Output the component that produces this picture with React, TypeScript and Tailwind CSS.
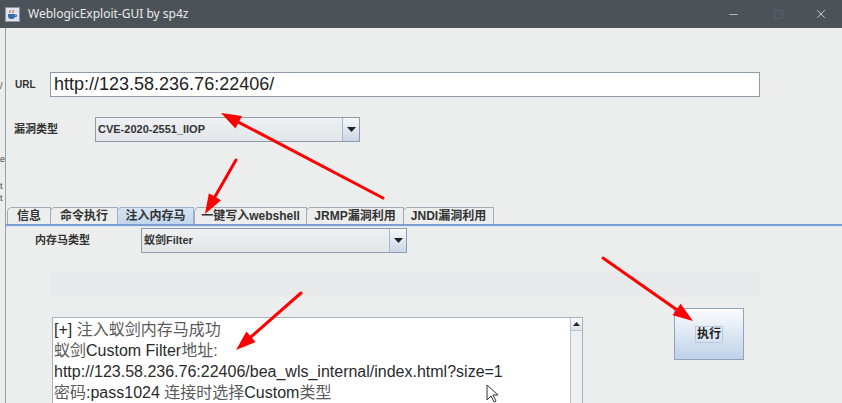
import React from 'react';
import { Minus, Square, X } from 'lucide-react';

const TABS = [
  { label: '信息', w: 'w-[44px]' },
  { label: '命令执行', w: 'w-[68px]' },
  { label: '注入内存马', w: 'w-[77px]' },
  { label: '一键写入webshell', w: 'w-[113px]' },
  { label: 'JRMP漏洞利用', w: 'w-[98px]' },
  { label: 'JNDI漏洞利用', w: 'w-[91px]' },
];
const ACTIVE_TAB = 2;

// red annotation arrows: [tailX, tailY, tipX, tipY]
const ARROWS: [number, number, number, number][] = [
  [383, 198, 221, 113],
  [236, 160, 205, 214],
  [301, 293, 236, 350],
  [603, 258, 693, 321],
];

function Arrow({ a }: { a: [number, number, number, number] }) {
  const [x1, y1, x2, y2] = a;
  const dx = x2 - x1;
  const dy = y2 - y1;
  const len = Math.hypot(dx, dy);
  const ux = dx / len;
  const uy = dy / len;
  const head = 20;
  const half = 7;
  const bx = x2 - ux * head;
  const by = y2 - uy * head;
  const pts = `${x2},${y2} ${bx - uy * half},${by + ux * half} ${bx + uy * half},${by - ux * half}`;
  return (
    <g>
      <line x1={x1} y1={y1} x2={bx + ux * 2} y2={by + uy * 2} stroke="#f00" strokeWidth={3} strokeLinecap="round" />
      <polygon points={pts} fill="#f00" />
    </g>
  );
}

function Combo({ value, width }: { value: string; width: string }) {
  return (
    <div className={`${width} h-[25px] flex border border-[#8d9cad] bg-gradient-to-b from-[#eef0f2] to-[#e3e6e9]`}>
      <div className="flex-1 flex items-center pl-[2px] text-[11px] font-bold text-[#333] truncate">{value}</div>
      <div className="w-[17px] h-full border-l border-[#a8b6c6] bg-gradient-to-b from-[#f6f8fa] to-[#c9d7e7] flex items-center justify-center">
        <svg width="9" height="5" viewBox="0 0 9 5"><polygon points="0,0 9,0 4.5,5" fill="#222" /></svg>
      </div>
    </div>
  );
}

export default function App() {
  return (
    <div className="relative w-[842px] h-[403px] overflow-hidden bg-[#eceeed] font-['Liberation_Sans','Noto_Sans_CJK_SC',sans-serif] text-[#333]">
      {/* title bar */}
      <div className="h-[28px] bg-[#4b5258] flex items-center">
        <div className="ml-[5px] w-[15px] h-[15px] bg-[#dfe4ea] border border-[#8a96a3] flex items-end justify-center pb-[1px]">
          <svg width="11" height="11" viewBox="0 0 11 11">
            <path d="M3 1c1 1-1 2 0 3M6 1c1 1-1 2 0 3" stroke="#d03a2a" strokeWidth="1" fill="none" />
            <path d="M1 5h7v2a3 3 0 0 1-3 3H4a3 3 0 0 1-3-3z" fill="#3a6ab0" />
            <path d="M8 6h1.5v1.5H8" stroke="#3a6ab0" fill="none" />
          </svg>
        </div>
        <span className="ml-[8px] text-[12px] text-[#e9eaea] font-['Noto_Sans',sans-serif]">WeblogicExploit-GUI by sp4z</span>
        <div className="ml-auto flex items-center">
          <Minus size={13} strokeWidth={1.2} className="text-[#f0f0f0] mr-[33px]" />
          <Square size={11} strokeWidth={1.2} className="text-[#6a7177] mr-[30px]" />
          <X size={14} strokeWidth={1.3} className="text-[#eeeeee] mr-[14px]" />
        </div>
      </div>

      <div className="flex h-[375px]">
        {/* glyphs of the window behind, peeking out at the edge */}
        <div className="w-[5px] shrink-0 text-[9px] leading-none text-[#444]">
          <div className="mt-[54px]">/</div>
          <div className="mt-[64px]">e</div>
          <div className="mt-[18px]">t</div>
          <div className="mt-[3px]">t</div>
        </div>

        <div className="flex-1 border-l border-[#9aa1a8] flex flex-col [&>*]:shrink-0">
          {/* URL */}
          <div className="mt-[44px] flex items-center pl-[9px]">
            <span className="w-[35px] text-[10px] font-bold text-[#333]">URL</span>
            <div className="w-[710px] h-[25px] bg-white border border-[#8e9aa7] flex items-center pl-[3px] text-[18px] text-[#222]">
              http://123.58.236.76:22406/
            </div>
          </div>

          {/* vuln type */}
          <div className="mt-[20px] flex items-center pl-[8px]">
            <span className="w-[81px] text-[11px] font-bold text-[#333]">漏洞类型</span>
            <Combo value="CVE-2020-2551_IIOP" width="w-[265px]" />
          </div>

          {/* tabs */}
          <div className="mt-[65px] flex items-end pl-[1px] h-[17px]">
            {TABS.map((t, i) => (
              <div
                key={t.label}
                className={`${t.w} h-[17px] flex items-center justify-center text-[12px] font-bold text-[#333] border border-b-0 rounded-tl-[5px] -mr-px ${
                  i === ACTIVE_TAB ? 'bg-gradient-to-b from-[#d6e4f3] to-[#c2d6ec] border-[#9db3cc]' : 'bg-[#eceeed] border-[#a3acb6]'
                } ${i === 3 ? 'ml-[1px]' : ''}`}
              >
                {t.label}
              </div>
            ))}
          </div>
          <div className="h-[2px] bg-[#7c9fd3]" />
          <div className="h-[1px] bg-[#dde6f1]" />

          {/* tab body */}
          <div className="mt-[1px] flex items-center pl-[29px]">
            <span className="w-[106px] text-[11px] font-bold text-[#333]">内存马类型</span>
            <Combo value="蚁剑Filter" width="w-[266px]" />
          </div>

          <div className="mt-[19px] ml-[44px] w-[710px] h-[25px] bg-[#e8e9ea]" />

          <div className="mt-[11px] flex items-start">
            <div className="mt-[9px] ml-[46px] w-[531px] h-[90px] bg-white border border-[#a4b2c3] flex">
              <div className="flex-1 pl-[1px] pt-[1px] text-[16px] leading-[21px] text-[#2a2a2a] whitespace-nowrap overflow-hidden">
                <div>[+] <span className="text-[#5a5a5a]">注入蚁剑内存马成功</span></div>
                <div><span className="text-[#5a5a5a]">蚁剑</span>Custom Filter<span className="text-[#5a5a5a]">地址:</span></div>
                <div>http://123.58.236.76:22406/bea_wls_internal/index.html?size=1</div>
                <div><span className="text-[#5a5a5a]">密码</span>:pass1024 <span className="text-[#5a5a5a]">连接时选择</span>Custom<span className="text-[#5a5a5a]">类型</span></div>
              </div>
              <div className="w-[12px] border-l border-[#b8c3cf] bg-[#eef0f2]">
                <div className="h-[13px] border-b border-[#b8c3cf] bg-gradient-to-b from-[#f8f9fa] to-[#dde4ec] flex items-center justify-center">
                  <svg width="7" height="4" viewBox="0 0 7 4"><polygon points="0,4 7,4 3.5,0" fill="#222" /></svg>
                </div>
              </div>
            </div>

            <div className="ml-[91px] w-[70px] h-[52px] border border-[#8ea4bd] bg-gradient-to-b from-[#fbfcfd] to-[#bed2e9] flex items-center justify-center">
              <span className="text-[12px] font-bold text-[#222] border border-[#b9c9db] px-[1px] leading-[15px]">执行</span>
            </div>
          </div>
        </div>
      </div>

      {/* mouse pointer */}
      <svg className="absolute left-[486px] top-[384px] pointer-events-none" width="14" height="20" viewBox="0 0 14 20">
        <path d="M1 1v15l4-4 3 6 2-1-3-6h5z" fill="#fff" stroke="#333" strokeWidth="1" strokeLinejoin="round" />
      </svg>

      {/* annotation arrows */}
      <svg className="absolute inset-0 pointer-events-none" width="842" height="403">
        {ARROWS.map((a, i) => (
          <Arrow key={i} a={a} />
        ))}
      </svg>
    </div>
  );
}
